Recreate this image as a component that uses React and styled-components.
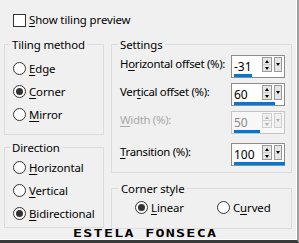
import React from "react";
import styled, { createGlobalStyle } from "styled-components";

const Global = createGlobalStyle`
  html, body { margin: 0; padding: 0; background: #f0f0f0; }
  * { box-sizing: border-box; }
`;

const Window = styled.div`
  position: relative;
  width: 299px;
  height: 243px;
  background: #f0f0f0;
  border-right: 2px solid #a0a0a0;
  border-bottom: 3px solid #3a3a3a;
  box-shadow: inset -1px -1px 0 #ffffff;
  font-family: "Noto Sans", "Open Sans", sans-serif;
  font-size: 11.4px;
  letter-spacing: -0.1px;
  color: #000;
  overflow: hidden;
  white-space: nowrap;
`;

const TopRow = styled.label`
  display: flex;
  align-items: center;
  gap: 3px;
  padding: 12px 0 0 13px;
  height: 28px;
  line-height: 16px;
`;

const CheckBox = styled.span`
  width: 13px;
  height: 13px;
  border: 1px solid #333;
  background: #fff;
  flex: none;
`;

const Columns = styled.div`
  display: flex;
  gap: 7px;
  padding: 9px 0 0 4px;
`;

const Column = styled.div`
  display: flex;
  flex-direction: column;
  width: ${(p) => p.$w}px;
  gap: ${(p) => p.$gap}px;
`;

const Group = styled.fieldset`
  margin: 0;
  padding: 0;
  border: 1px solid #dcdcdc;
  min-inline-size: 0;
`;

const GroupBody = styled.div`
  padding: ${(p) => p.$pad};
`;

const Legend = styled.legend`
  padding: 0 2px;
  margin-left: ${(p) => p.$ml}px;
  line-height: 15px;
`;

const RadioList = styled.div`
  display: flex;
  flex-direction: ${(p) => (p.$row ? "row" : "column")};
`;

const RadioItem = styled.div`
  display: flex;
  align-items: center;
  gap: 3px;
  height: 23px;
  width: ${(p) => (p.$w ? `${p.$w}px` : "auto")};
`;

const RadioCircle = styled.span`
  width: 13px;
  height: 13px;
  border-radius: 50%;
  border: 1px solid #333;
  background: #fff;
  display: flex;
  align-items: center;
  justify-content: center;
  flex: none;
  &::after {
    content: "";
    width: 7px;
    height: 7px;
    border-radius: 50%;
    background: ${(p) => (p.$on ? "#333" : "transparent")};
  }
`;

const Key = styled.span`
  text-decoration: underline;
  text-underline-offset: 2px;
`;

const Label = styled.span`
  line-height: 16px;
`;

const SettingRows = styled.div`
  display: flex;
  flex-direction: column;
`;

const SettingRow = styled.div`
  display: flex;
  align-items: flex-start;
  margin-top: ${(p) => p.$mt}px;
`;

const SettingLabel = styled.span`
  width: 111px;
  line-height: 16px;
  padding-top: 1px;
  letter-spacing: -0.3px;
  color: ${(p) => (p.$disabled ? "#a8a8a8" : "#000")};
`;

const SpinField = styled.div`
  width: 54px;
  height: 23px;
  border: 1px solid ${(p) => (p.$disabled ? "#c4c4c4" : "#8c8c8c")};
  background: ${(p) => (p.$disabled ? "#f7f7f7" : "#fff")};
  padding: 1px 1px 0 1px;
  display: flex;
  flex-direction: column;
`;

const SpinTop = styled.div`
  display: flex;
  height: 15px;
`;

const SpinValue = styled.span`
  flex: 1;
  line-height: 15px;
  padding: 2px 0 0 1px;
  font-size: 12px;
  letter-spacing: 0;
  color: ${(p) => (p.$disabled ? "#8a8a8a" : "#000")};
`;

const SpinButtons = styled.div`
  width: 10px;
  height: 15px;
  display: flex;
  flex-direction: column;
  border: 1px solid ${(p) => (p.$disabled ? "#d0d0d0" : "#9a9a9a")};
  background: ${(p) => (p.$disabled ? "#f0f0f0" : "#e6e6e6")};
`;

const SpinHalf = styled.span`
  flex: 1;
  display: flex;
  align-items: center;
  justify-content: center;
  & + & {
    border-top: 1px solid ${(p) => (p.$disabled ? "#d0d0d0" : "#9a9a9a")};
  }
  &::after {
    content: "";
    border-left: 2.5px solid transparent;
    border-right: 2.5px solid transparent;
    ${(p) =>
      p.$up
        ? `border-bottom: 3px solid ${p.$disabled ? "#b0b0b0" : "#000"};`
        : `border-top: 3px solid ${p.$disabled ? "#b0b0b0" : "#000"};`}
  }
`;

const DropButton = styled.span`
  width: 8px;
  height: 15px;
  margin-left: 2px;
  margin-right: 1px;
  border: 1px solid ${(p) => (p.$disabled ? "#d0d0d0" : "#9a9a9a")};
  background: ${(p) => (p.$disabled ? "#f0f0f0" : "#e6e6e6")};
  display: flex;
  align-items: center;
  justify-content: center;
  &::after {
    content: "";
    border-left: 2.5px solid transparent;
    border-right: 2.5px solid transparent;
    border-top: 3px solid ${(p) => (p.$disabled ? "#b0b0b0" : "#000")};
  }
`;

const Track = styled.div`
  margin: 2px 0 0 1px;
  width: 51px;
  height: 3px;
`;

const Fill = styled.div`
  height: 3px;
  background: #0078d7;
`;

const Watermark = styled.div`
  position: absolute;
  left: 73px;
  top: 229px;
  font-family: "DejaVu Sans Mono", monospace;
  font-weight: bold;
  font-size: 10px;
  line-height: 10px;
  letter-spacing: 0.85px;
  transform: scaleX(1.5);
  transform-origin: left top;
  color: #000;
  white-space: nowrap;
`;

function Spin({ value, min, max, mt, label, disabled }) {
  const pct = ((value - min) / (max - min)) * 100;
  return (
    <SettingRow $mt={mt}>
      <SettingLabel $disabled={disabled}>{label}</SettingLabel>
      <SpinField $disabled={disabled}>
        <SpinTop>
          <SpinValue $disabled={disabled}>{value}</SpinValue>
          <SpinButtons $disabled={disabled}>
            <SpinHalf $up $disabled={disabled} />
            <SpinHalf $disabled={disabled} />
          </SpinButtons>
          <DropButton $disabled={disabled} />
        </SpinTop>
        <Track>
          <Fill style={{ width: `${pct}%` }} />
        </Track>
      </SpinField>
    </SettingRow>
  );
}

function Radio({ on, children, w }) {
  return (
    <RadioItem $w={w}>
      <RadioCircle $on={on} />
      <Label>{children}</Label>
    </RadioItem>
  );
}

export default function App() {
  return (
    <Window>
      <Global />
      <TopRow>
        <CheckBox />
        <Label>
          <Key>S</Key>how tiling preview
        </Label>
      </TopRow>
      <Columns>
        <Column $w={100} $gap={5}>
          <Group>
            <Legend $ml={5}>Tiling method</Legend>
            <GroupBody $pad="5px 0 8px 8px">
              <RadioList>
                <Radio>
                  <Key>E</Key>dge
                </Radio>
                <Radio on>
                  <Key>C</Key>orner
                </Radio>
                <Radio>
                  <Key>M</Key>irror
                </Radio>
              </RadioList>
            </GroupBody>
          </Group>
          <Group>
            <Legend $ml={5}>Direction</Legend>
            <GroupBody $pad="1px 0 2px 8px">
              <RadioList>
                <Radio>
                  <Key>H</Key>orizontal
                </Radio>
                <Radio>
                  <Key>V</Key>ertical
                </Radio>
                <Radio on>
                  <Key>B</Key>idirectional
                </Radio>
              </RadioList>
            </GroupBody>
          </Group>
        </Column>
        <Column $w={181} $gap={8}>
          <Group>
            <Legend $ml={6}>Settings</Legend>
            <GroupBody $pad="3px 6px 6px 8px">
              <SettingRows>
                <Spin
                  mt={0}
                  min={-100}
                  max={100}
                  value={-31}
                  label={
                    <>
                      H<Key>o</Key>rizontal offset (%):
                    </>
                  }
                />
                <Spin
                  mt={5}
                  min={-100}
                  max={100}
                  value={60}
                  label={
                    <>
                      Ver<Key>t</Key>ical offset (%):
                    </>
                  }
                />
                <Spin
                  mt={5}
                  min={0}
                  max={100}
                  value={50}
                  disabled
                  label={
                    <>
                      <Key>W</Key>idth (%):
                    </>
                  }
                />
                <Spin
                  mt={9}
                  min={0}
                  max={100}
                  value={100}
                  label={
                    <>
                      <Key>T</Key>ransition (%):
                    </>
                  }
                />
              </SettingRows>
            </GroupBody>
          </Group>
          <Group>
            <Legend $ml={7}>Corner style</Legend>
            <GroupBody $pad="0 0 9px 23px">
              <RadioList $row>
                <Radio on w={82}>
                  <Key>L</Key>inear
                </Radio>
                <Radio>
                  C<Key>u</Key>rved
                </Radio>
              </RadioList>
            </GroupBody>
          </Group>
        </Column>
      </Columns>
      <Watermark>ESTELA FONSECA</Watermark>
    </Window>
  );
}
